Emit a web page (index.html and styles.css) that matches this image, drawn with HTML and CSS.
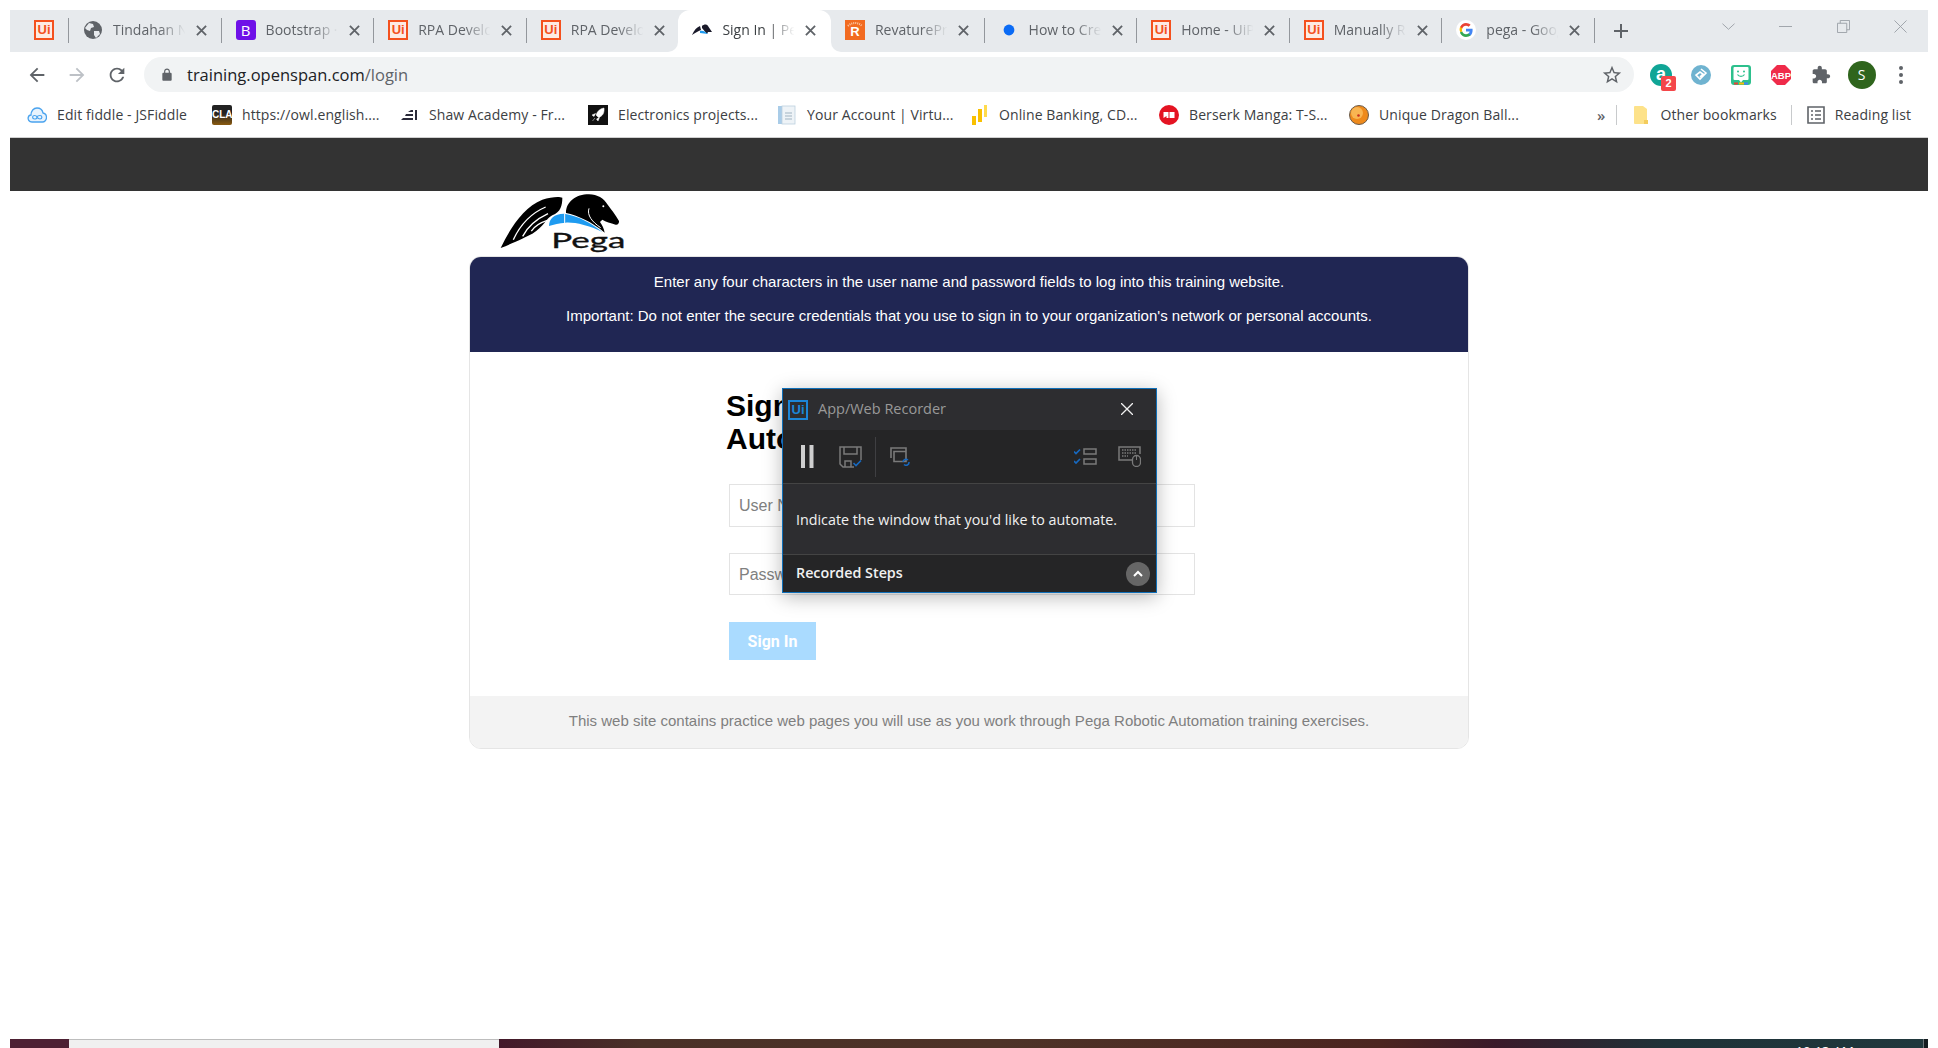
FILE: index.html
```html
<!DOCTYPE html>
<html lang="en">
<head>
<meta charset="utf-8">
<title>Sign In | Pega</title>
<link rel="stylesheet" href="styles.css">
</head>
<body>
<div class="window">
  <div class="tabstrip">
    <div class="tab pinned"><span class="ui-icon">Ui</span></div>
    <i class="sep"></i>
    <div class="tab">
      <svg class="fav" viewBox="0 0 20 20"><circle cx="10" cy="10" r="9" fill="#5f6368"/><path d="M6 3l4 1 1 3-3 1-1 3-3-1-2-2zM11 11l5 0 1 3-4 4-2-3z" fill="#e7eaed"/></svg>
      <span class="title">Tindahan Ni Juan</span><svg class="x" viewBox="0 0 12 12"><path d="M1 1l10 10M11 1L1 11"/></svg>
    </div>
    <i class="sep"></i>
    <div class="tab">
      <span class="bs-icon">B</span>
      <span class="title">Bootstrap · The</span><svg class="x" viewBox="0 0 12 12"><path d="M1 1l10 10M11 1L1 11"/></svg>
    </div>
    <i class="sep"></i>
    <div class="tab">
      <span class="ui-icon">Ui</span>
      <span class="title">RPA Developer</span><svg class="x" viewBox="0 0 12 12"><path d="M1 1l10 10M11 1L1 11"/></svg>
    </div>
    <i class="sep"></i>
    <div class="tab left-of-active">
      <span class="ui-icon">Ui</span>
      <span class="title">RPA Developer</span><svg class="x" viewBox="0 0 12 12"><path d="M1 1l10 10M11 1L1 11"/></svg>
    </div>
    <div class="tab active">
      <svg class="fav" viewBox="0 0 20 20"><path d="M0 15C2 10 5 7 8 6l1 4C6 11 3 13 0 15zM10 6c2-2 5-2 6 0l4 6-4 0-1 2-5-6z" fill="#1a1a2a"/><path d="M8 11c2-1 5 0 8 3l-8-1z" fill="#1e9bf0"/></svg>
      <span class="title">Sign In | Pega</span><svg class="x" viewBox="0 0 12 12"><path d="M1 1l10 10M11 1L1 11"/></svg>
    </div>
    <div class="tab right-of-active">
      <svg class="fav" viewBox="0 0 20 20"><rect width="20" height="20" fill="#f26b21"/><path d="M3 6C7 2 13 2 17 6" fill="none" stroke="#fbc9a6" stroke-width="2" stroke-dasharray="1 1"/><text x="10" y="16" class="fav-r">R</text></svg>
      <span class="title">RevaturePro</span><svg class="x" viewBox="0 0 12 12"><path d="M1 1l10 10M11 1L1 11"/></svg>
    </div>
    <i class="sep"></i>
    <div class="tab">
      <svg class="fav" viewBox="0 0 20 20"><circle cx="10" cy="10" r="5.4" fill="#0b6bf5"/></svg>
      <span class="title">How to Create</span><svg class="x" viewBox="0 0 12 12"><path d="M1 1l10 10M11 1L1 11"/></svg>
    </div>
    <i class="sep"></i>
    <div class="tab">
      <span class="ui-icon">Ui</span>
      <span class="title">Home - UiPath</span><svg class="x" viewBox="0 0 12 12"><path d="M1 1l10 10M11 1L1 11"/></svg>
    </div>
    <i class="sep"></i>
    <div class="tab">
      <span class="ui-icon">Ui</span>
      <span class="title">Manually Reco</span><svg class="x" viewBox="0 0 12 12"><path d="M1 1l10 10M11 1L1 11"/></svg>
    </div>
    <i class="sep"></i>
    <div class="tab">
      <svg class="fav" viewBox="0 0 20 20"><circle cx="10" cy="10" r="10" fill="#fff"/><path d="M16.6 10.2c0-.5 0-1-.1-1.400H10v2.700h3.700c-.2.9-.7 1.600-1.400 2.100v1.800h2.300c1.300-1.200 2-3 2-5.200z" fill="#4285f4"/><path d="M10 17c1.900 0 3.400-.6 4.600-1.700l-2.300-1.800c-.6.400-1.400.7-2.300.7-1.800 0-3.300-1.200-3.800-2.800H4.200v1.800C5.400 15.500 7.500 17 10 17z" fill="#34a853"/><path d="M6.200 11.400c-.3-.9-.3-1.900 0-2.800V6.800H4.200c-.8 1.600-.8 3.600 0 5.200l2-.6z" fill="#fbbc05"/><path d="M10 5.800c1 0 1.900.4 2.600 1l2-2C13.400 3.700 11.800 3 10 3 7.500 3 5.400 4.500 4.200 6.800l2 1.800C6.700 7 8.200 5.800 10 5.800z" fill="#ea4335"/></svg>
      <span class="title">pega - Google</span><svg class="x" viewBox="0 0 12 12"><path d="M1 1l10 10M11 1L1 11"/></svg>
    </div>
    <i class="sep"></i>
    <div class="strip-end">
      <svg class="plus" viewBox="0 0 14 14"><path d="M7 0v14M0 7h14"/></svg>
      <svg class="wc chev" viewBox="0 0 14 14"><path d="M.5 4L7 10l6.500-6"/></svg>
      <svg class="wc min" viewBox="0 0 14 14"><path d="M0 7h14"/></svg>
      <svg class="wc max" viewBox="0 0 14 14"><path d="M.5 3.500h10v10H.5zM3.500 3.500V.5h10v10h-3"/></svg>
      <svg class="wc cls" viewBox="0 0 14 14"><path d="M.5.5l13 13M13.500.5l-13 13"/></svg>
    </div>
  </div>

  <div class="toolbar">
    <div class="nav-btn"><svg viewBox="0 0 24 24" class="ico"><path d="M20 11H7.830l5.590-5.590L12 4l-8 8 8 8 1.410-1.410L7.830 13H20v-2z"/></svg></div>
    <div class="nav-btn"><svg viewBox="0 0 24 24" class="ico dim"><path d="M4 11h12.170l-5.590-5.590L12 4l8 8-8 8-1.410-1.410L16.170 13H4v-2z"/></svg></div>
    <div class="nav-btn"><svg viewBox="0 0 24 24" class="ico"><path d="M17.650 6.350C16.200 4.900 14.210 4 12 4c-4.420 0-7.990 3.580-7.990 8s3.570 8 7.990 8c3.730 0 6.840-2.550 7.730-6h-2.080c-.82 2.330-3.040 4-5.650 4-3.310 0-6-2.690-6-6s2.690-6 6-6c1.660 0 3.140.69 4.220 1.780L13 11h7V4l-2.350 2.350z"/></svg></div>
    <div class="omnibox">
      <svg viewBox="0 0 24 24" class="lock"><path d="M18 8h-1V6c0-2.760-2.240-5-5-5S7 3.240 7 6v2H6c-1.100 0-2 .9-2 2v10c0 1.100.9 2 2 2h12c1.100 0 2-.9 2-2V10c0-1.100-.9-2-2-2zM9 6c0-1.660 1.340-3 3-3s3 1.340 3 3v2H9V6z"/></svg>
      <span class="url">training.openspan.com<span class="url-path">/login</span></span>
      <svg viewBox="0 0 24 24" class="star"><path d="M22 9.240l-7.190-.62L12 2 9.190 8.630 2 9.240l5.460 4.730L5.820 21 12 17.270 18.180 21l-1.630-7.030L22 9.240zM12 15.400l-3.760 2.270 1-4.280-3.320-2.880 4.380-.38L12 6.100l1.710 4.040 4.380.38-3.320 2.880 1 4.280L12 15.400z"/></svg>
    </div>
    <div class="exts">
      <div class="ext">
        <span class="ext-a">a</span><span class="ext-badge">2</span>
      </div>
      <div class="ext"><svg viewBox="0 0 20 20" class="ext-svg"><circle cx="10" cy="10" r="10" fill="#6fb3d0"/><path d="M10 4l5 4-6 6-4-4 4-3 3 2-3 3" fill="none" stroke="#fff" stroke-width="1.600"/></svg></div>
      <div class="ext"><svg viewBox="0 0 20 20" class="ext-svg"><rect width="20" height="20" rx="3" fill="#2dc08d"/><rect x="2.500" y="2" width="15" height="13" rx="1" fill="#fff"/><path d="M8 15h4l-2 2.500z" fill="#fff"/><circle cx="7" cy="6.500" r="1" fill="#2dc08d"/><circle cx="13" cy="6.500" r="1" fill="#2dc08d"/><path d="M6.500 9.500c1.500 2.500 5.500 2.500 7 0" fill="none" stroke="#2dc08d" stroke-width="1.200"/><path d="M3 18.500h4" stroke="#ea4335" stroke-width="2"/><path d="M8 18.500h5" stroke="#fbbc05" stroke-width="2"/><path d="M13 18.500h4" stroke="#4285f4" stroke-width="2"/></svg></div>
      <div class="ext"><svg viewBox="0 0 20 20" class="ext-svg"><path d="M6 0h8l6 6v8l-6 6H6l-6-6V6z" fill="#ef2b4a"/><text x="10" y="13.500" class="abp">ABP</text></svg></div>
      <div class="ext"><svg viewBox="0 0 24 24" class="ext-svg"><path fill="#5f6368" d="M20.500 11H19V7c0-1.100-.9-2-2-2h-4V3.500C13 2.120 11.880 1 10.500 1S8 2.120 8 3.500V5H4c-1.100 0-1.990.9-1.990 2v3.800H3.500c1.490 0 2.700 1.210 2.700 2.700s-1.210 2.700-2.700 2.700H2V20c0 1.100.9 2 2 2h3.800v-1.500c0-1.490 1.210-2.700 2.700-2.700 1.490 0 2.700 1.210 2.700 2.700V22H17c1.100 0 2-.9 2-2v-4h1.500c1.380 0 2.500-1.120 2.500-2.500S21.880 11 20.500 11z"/></svg></div>
      <div class="ext"><span class="avatar">S</span></div>
      <div class="ext"><span class="kebab"><i></i><i></i><i></i></span></div>
    </div>
  </div>

  <div class="bookmarks">
    <div class="bm-list">
      <div class="bm"><svg class="bm-ico" viewBox="0 0 20 20"><path d="M5 17C2 17 .8 14.500 1.200 12.500 1.500 11 2.700 10 4 10 4 6 6.500 3 10 3s5.500 2.500 6 5c2 .3 3.500 2 3.500 4.500S17.500 17 15.500 17z" fill="#e8f3fd" stroke="#4aa3ee" stroke-width="1.300"/><path d="M7.500 10.500c-2.500 0-2.500 3.500 0 3.500S10 12.200 10 12.200s1.500 1.800 3 1.800c2.500 0 2.500-3.500 0-3.500S10 12.200 10 12.200 9.500 10.500 7.500 10.500z" fill="none" stroke="#4aa3ee" stroke-width="1.200"/></svg><span>Edit fiddle - JSFiddle</span></div>
      <div class="bm"><span class="cla">CLA</span><span>https://owl.english....</span></div>
      <div class="bm"><svg class="bm-ico" viewBox="0 0 20 20"><path d="M2 15h12v-2H4zM6 11h8V9H7zM16 5v10h2V5zM9 7h5V5h-2z" fill="#2b2b3a"/></svg><span>Shaw Academy - Fr...</span></div>
      <div class="bm"><svg class="bm-ico" viewBox="0 0 20 20"><rect width="20" height="20" fill="#111"/><path d="M16 3c-4 .5-6.500 3-8 7l2.500 2.500c4-1.500 6-4 5.500-9.500zM7.500 8.500L4 10l2 1.500zM11.500 12.500L10 16l-1.500-2zM7 13l-2.500 3" fill="#fff" stroke="#fff" stroke-width=".5"/></svg><span>Electronics projects...</span></div>
      <div class="bm"><svg class="bm-ico" viewBox="0 0 20 20"><rect x="1" y="1" width="5" height="18" fill="#a9cce8"/><rect x="5" y="1" width="13" height="18" fill="#eef3f7" stroke="#bcd0df" stroke-width=".8"/><path d="M8 8h7M8 11h7M8 14h7" stroke="#9fb3c2" stroke-width="1.200"/></svg><span>Your Account | Virtu...</span></div>
      <div class="bm"><svg class="bm-ico" viewBox="0 0 20 20"><path d="M3 11h4v9H3zM9 4h4v13H9z" fill="#f9c000"/><rect x="15" y="0" width="3" height="12" fill="#ffdb4d"/></svg><span>Online Banking, CD...</span></div>
      <div class="bm"><svg class="bm-ico" viewBox="0 0 20 20"><circle cx="10" cy="10" r="10" fill="#e41322"/><path d="M4.500 7h5v6h-2V11l-3 2zM10.500 7h5v6h-5z" fill="#fff"/></svg><span>Berserk Manga: T-S...</span></div>
      <div class="bm"><svg class="bm-ico" viewBox="0 0 20 20"><circle cx="10" cy="10" r="9.500" fill="#ee8a1c" stroke="#6b5b4a"/><circle cx="8" cy="8" r="6" fill="#f9b552"/><circle cx="9.500" cy="10.500" r="1.300" fill="#c8301d"/></svg><span>Unique Dragon Ball...</span></div>
    </div>
    <div class="bm-right">
      <span class="more">»</span>
      <i class="bm-sep"></i>
      <div class="bm bm-folder"><svg class="bm-ico folder" viewBox="0 0 16 20"><path d="M2 1h8l4 3v15H2a1 1 0 0 1-1-1V2a1 1 0 0 1 1-1z" fill="#fde28a"/><path d="M11 15h4v4h-4z" fill="#f3cc5d"/></svg><span class="bm-other">Other bookmarks</span></div>
      <i class="bm-sep"></i>
      <div class="bm bm-reading"><svg class="bm-ico list" viewBox="0 0 18 18"><path d="M1 1h16v16H1z" fill="none" stroke="#5f6368" stroke-width="1.600"/><path d="M4 5h2M8 5h6M4 9h2M8 9h6M4 13h2M8 13h6" stroke="#5f6368" stroke-width="1.600"/></svg><span>Reading list</span></div>
    </div>
  </div>

  <div class="sitebar"></div>

  <main class="page">
    <div class="logo-wrap">
      <svg class="logo" viewBox="115 35 390 185">
        <path d="M120 203C150 140 190 80 245 58 270 50 295 48 305 52 305 75 300 95 275 105 255 115 250 140 215 160 195 170 165 185 120 203z" fill="#000"/>
        <path d="M158 178C178 135 208 100 255 80M186 168C203 135 230 115 262 100M212 152C222 137 238 127 260 120" stroke="#fff" stroke-width="4" fill="none"/>
        <path d="M265 137C265 115 280 100 310 100 350 105 395 130 425 155 385 135 340 125 315 127 295 128 280 132 265 137z" fill="#1e9bf0"/>
        <path d="M312 100v28" stroke="#fff" stroke-width="3"/>
        <path d="M316 98C316 65 345 42 385 42 410 42 430 55 440 72 450 85 465 105 475 122 476 128 472 134 465 133 450 128 435 125 425 118L418 125C425 135 430 145 432 157 395 125 350 105 316 98z" fill="#000"/>
        <path d="M385 84C378 105 395 125 420 142" fill="none" stroke="#fff" stroke-width="3"/>
        <circle cx="428" cy="78" r="3" fill="#fff"/>
        <text x="272" y="203" class="logo-text" textLength="222" lengthAdjust="spacingAndGlyphs">Pega</text>
      </svg>
    </div>
    <section class="card">
      <header class="notice">
        <p>Enter any four characters in the user name and password fields to log into this training website.</p>
        <p>Important: Do not enter the secure credentials that you use to sign in to your organization's network or personal accounts.</p>
      </header>
      <div class="card-body">
        <h1 class="heading">Sign In to<br>Automation</h1>
        <input class="field" type="text" placeholder="User Name">
        <input class="field" type="password" placeholder="Password">
        <button class="signin" type="button">Sign In</button>
      </div>
      <footer class="card-foot">This web site contains practice web pages you will use as you work through Pega Robotic Automation training exercises.</footer>
    </section>
  </main>

  <div class="desktop">
    <div class="d-start"></div>
    <div class="d-window"></div>
    <div class="d-wall"><span class="d-clock">10:13 AM</span></div>
    <div class="d-edge"></div>
  </div>
</div>

<aside class="recorder">
  <div class="rec-title">
    <span class="rec-logo">Ui</span>
    <span class="rec-name">App/Web Recorder</span>
    <svg class="rec-x" viewBox="0 0 12 12"><path d="M0 0l12 12M12 0L0 12"/></svg>
  </div>
  <div class="rec-tools">
    <svg class="r-pause" viewBox="0 0 13 23"><rect x="0" width="4" height="23" fill="#cfcfcf"/><rect x="8.500" width="4" height="23" fill="#cfcfcf"/></svg>
    <svg class="r-save" viewBox="0 0 23 22"><path d="M15 21H4l-3-3V1h21v13" fill="none" stroke="#7a7a7a" stroke-width="1.500"/><path d="M5 1v7h13V1M6 21v-6h6v6" fill="none" stroke="#7a7a7a" stroke-width="1.500"/><path d="M14.500 17l2.500 2.500 5-5" fill="none" stroke="#1769c0" stroke-width="1.600"/></svg>
    <i class="r-div"></i>
    <svg class="r-win" viewBox="0 0 20 19"><path d="M1 11V1h15v3" fill="none" stroke="#7a7a7a" stroke-width="1.600"/><path d="M4 4.500h12v10H4z" fill="#252526" stroke="#7a7a7a" stroke-width="1.600"/><path d="M13 15a3 3 0 0 1 5-2M19 15a3 3 0 0 1-5 2.500" fill="none" stroke="#1769c0" stroke-width="1.500"/></svg>
    <svg class="r-check" viewBox="0 0 23 17"><path d="M0 3.500l2 2 4-4M0 13l2 2 4-4" fill="none" stroke="#1769c0" stroke-width="1.700"/><path d="M10 1h12v5H10zM10 11h12v5H10z" fill="none" stroke="#7a7a7a" stroke-width="1.500"/></svg>
    <svg class="r-kb" viewBox="0 0 23 21"><path d="M14 14H1V1h21v7" fill="none" stroke="#7a7a7a" stroke-width="1.500"/><path d="M4 4h15M4 7h15M4 10h6" stroke="#7a7a7a" stroke-dasharray="1.500 1" stroke-width="1.300"/><rect x="14.500" y="9.500" width="8" height="11" rx="4" fill="#252526" stroke="#7a7a7a" stroke-width="1.300"/><path d="M18.500 10v4" stroke="#7a7a7a"/></svg>
  </div>
  <div class="rec-msg">Indicate the window that you'd like to automate.</div>
  <div class="rec-foot">
    <span class="rec-steps">Recorded Steps</span>
    <span class="rec-toggle"><svg viewBox="0 0 10 7"><path d="M1 6l4-4 4 4"/></svg></span>
  </div>
</aside>
</body>
</html>
```

FILE: styles.css
```css
* { box-sizing: border-box; }
html, body { margin: 0; height: 100%; }
body {
  background: #fff;
  overflow: hidden;
  padding: 10px 10px 0;
  font-family: "Open Sans", "Noto Sans", sans-serif;
  position: relative;
}
.window { display: flex; flex-direction: column; height: 1038px; overflow: hidden; }

/* tab strip */
.tabstrip {
  display: flex;
  height: 42px;
  flex: none;
  background: linear-gradient(#e7eaed 50%, #fff 50%);
}
.tab {
  width: 151.6px;
  flex: none;
  display: flex;
  align-items: center;
  padding-left: 14px;
  padding-bottom: 2px;
  background: #e7eaed;
  color: #5f6368;
  font-size: 14px;
}
.tab.pinned { width: 58px; padding-left: 24px; }
.tab.left-of-active { border-bottom-right-radius: 10px; }
.tab.right-of-active { border-bottom-left-radius: 10px; }
.tab.active { width: 152.6px; background: #fff; border-radius: 12px 12px 0 0; color: #3c4043; }
.tab.right-of-active { width: 152.6px; }
.sep { width: 1px; flex: none; background: #e7eaed; position: relative; }
.sep::before { content: ""; display: block; margin-top: 8px; height: 25px; background: #93979c; }
.fav { width: 20px; height: 20px; flex: none; }
.fav-r { font: 700 13px "Liberation Sans", sans-serif; fill: #fff; text-anchor: middle; }
.ui-icon {
  width: 20px; height: 20px; flex: none;
  border: 2px solid #f4511e;
  background: #fdebe4;
  color: #f4511e;
  font: 700 13px/16px "Liberation Sans", sans-serif;
  text-align: center;
}
.bs-icon {
  width: 20px; height: 20px; flex: none;
  border-radius: 3px;
  background: #6f10e8;
  color: #fff;
  font: 400 15px/20px "Open Sans", sans-serif;
  text-align: center;
}
.title {
  width: 74px;
  margin-left: 10px;
  margin-right: 6px;
  margin-bottom: 1px;
  white-space: nowrap;
  overflow: hidden;
  -webkit-mask-image: linear-gradient(to right, #000 62%, transparent 98%);
  mask-image: linear-gradient(to right, #000 62%, transparent 98%);
}
.x { width: 11px; height: 11px; margin-left: 3px; flex: none; }
.x path { fill: none; stroke: #5f6368; stroke-width: 2; }
.strip-end {
  flex: 1;
  display: flex;
  align-items: center;
  background: #e7eaed;
  padding-right: 22px;
}
.plus { width: 14px; height: 14px; margin-left: 19px; flex: none; }
.plus path { fill: none; stroke: #5f6368; stroke-width: 2; }
.wc { width: 13px; height: 13px; flex: none; margin-bottom: 9px; }
.wc path { fill: none; stroke: #9aa0a6; stroke-width: 1; }
.chev { margin-left: 94px; }
.min { margin-left: 44px; }
.max { margin-left: 45px; }
.cls { margin-left: 44px; }

/* toolbar */
.toolbar { display: flex; align-items: center; height: 45px; flex: none; padding-left: 6.500px; }
.nav-btn { width: 40px; display: flex; justify-content: center; }
.ico { width: 22px; height: 22px; fill: #5f6368; }
.ico.dim { fill: #bdc1c6; }
.omnibox {
  width: 1490px;
  height: 35px;
  margin-left: 7.500px;
  background: #f1f3f4;
  border-radius: 18px;
  display: flex;
  align-items: center;
  padding: 0 11px 0 16px;
  flex: none;
}
.lock { width: 14px; height: 14px; fill: #5f6368; flex: none; }
.url { margin-left: 13px; font-size: 16.500px; color: #202124; white-space: nowrap; }
.url-path { color: #5f6368; }
.star { width: 22px; height: 22px; fill: #5f6368; margin-left: auto; }
.exts { display: flex; margin-left: 7px; }
.ext { width: 40px; height: 34px; display: flex; align-items: center; justify-content: center; position: relative; }
.ext-svg { width: 20px; height: 20px; }
.ext-a {
  width: 22px; height: 22px; border-radius: 50%;
  background: #10a596; color: #fff;
  font: 700 18px/20px "Liberation Sans", sans-serif;
  text-align: center;
}
.ext-badge {
  position: absolute; left: 20px; top: 18px;
  width: 15px; height: 15px; border-radius: 2px;
  background: #f4474a; color: #fff;
  font: 700 11px/15px "Liberation Sans", sans-serif;
  text-align: center;
}
.abp { font: 700 9.500px "Liberation Sans", sans-serif; fill: #fff; text-anchor: middle; }
.avatar {
  width: 28px; height: 28px; border-radius: 50%;
  margin-left: 1px;
  background: #2f651d; color: #fff;
  font-size: 14px; line-height: 28px; text-align: center;
}
.kebab { display: flex; flex-direction: column; gap: 3px; }
.kebab i { width: 4px; height: 4px; border-radius: 50%; background: #5f6368; }

/* bookmarks */
.bookmarks {
  display: flex;
  height: 41px;
  flex: none;
  padding: 0 17px 5px;
  align-items: center;
  border-bottom: 1px solid #d0d0d0;
  font-size: 14px;
  letter-spacing: .1px;
  color: #3c4043;
}
.bm-list {
  display: grid;
  grid-template-columns: 185px 187px 189px 189px 192px 190px 190px 1fr;
  flex: 1;
  align-items: center;
}
.bm { display: flex; align-items: center; gap: 10px; white-space: nowrap; }
.bm-ico { width: 20px; height: 20px; flex: none; }
.bm-ico.folder { width: 16px; }
.bm-ico.list { width: 18px; height: 18px; }
.cla {
  width: 20px; height: 20px; flex: none;
  background: linear-gradient(#222 40%, #8a5a10);
  border-radius: 2px;
  color: #fff;
  font: 700 10px/20px "Liberation Sans Narrow", "Liberation Sans", sans-serif;
  text-align: center;
  overflow: hidden;
  letter-spacing: 0;
}
.bm-right { display: flex; align-items: center; flex: none; }
.more { font-size: 15px; font-weight: 600; color: #5f6368; margin-right: 11px; }
.bm-sep { width: 1px; height: 20px; background: #c8cacc; }
.bm-folder { margin: 0 14px 0 16px; }
.bm-reading { margin-left: 15px; }
.bm-other { margin-left: 1px; }

/* site */
.sitebar { height: 53px; flex: none; background: #333; }
.page { flex: 1; min-height: 0; }
.logo-wrap { width: 1000px; margin: 1px auto 0; height: 64px; padding-left: 30px; }
.logo { display: block; width: 130px; height: 61.700px; }
.logo-text { font: 400 66px "Lato", "Liberation Sans", sans-serif; fill: #111; stroke: #111; stroke-width: 1px; }
.card {
  width: 1000px;
  margin: 0 auto;
  border: 1px solid #e5e5e5;
  border-radius: 12px;
  font-family: "Liberation Sans", Arial, sans-serif;
  font-size: 15px;
  overflow: hidden;
}
.notice {
  height: 96px;
  margin: -1px -1px 0;
  background: #202653;
  color: #fff;
  text-align: center;
  padding-top: 17px;
  line-height: 18px;
}
.notice p { margin: 0 0 16px; }
.card-body { height: 344px; padding: 37px 0 0 256px; }
.heading { margin: 0 0 29px; font: 700 30px/33px "Liberation Sans", Arial, sans-serif; color: #000; }
.field {
  display: block;
  width: 466px;
  height: 43px;
  margin: 0 0 26px 3px;
  border: 1px solid #e3e3e3;
  padding: 0 9px;
  font: 16px "Liberation Sans", Arial, sans-serif;
  outline: none;
}
.field + .field { height: 42px; padding-top: 2px; margin-bottom: 27px; }
.field::placeholder { color: #808080; opacity: 1; }
.signin {
  display: block;
  width: 87px;
  height: 38px;
  margin: 0 0 0 3px;
  border: 0;
  background: #aadbff;
  color: #fff;
  font: 700 16px Roboto, "Liberation Sans", sans-serif;
}
.card-foot {
  height: 52px;
  background: #f3f3f3;
  color: #7f7f7f;
  text-align: center;
  line-height: 50px;
}

/* desktop strip */
.desktop { display: flex; height: 9px; flex: none; overflow: hidden; }
.d-start { width: 59px; background: #4d2033; }
.d-window { width: 430px; background: #f0f0f0; border-top: 1px solid #bdbdbd; }
.d-wall {
  flex: 1;
  background: linear-gradient(to right, #43182a 0, #4a3128 10%, #4e3328 35%, #4c2520 62%, #3a1a2a 70%, #1f3238 82%, #20383d 100%);
  color: #fff;
  font-size: 13.500px;
  line-height: 16px;
  padding: 4px 69px 0 0;
  text-align: right;
  overflow: hidden;
}
.d-clock { display: inline-block; }
.d-edge { width: 5px; background: #141c20; border-left: 1px solid #6a7478; }

/* floating recorder */
.recorder {
  position: absolute;
  left: 782px;
  top: 388px;
  width: 375px;
  height: 205px;
  display: flex;
  flex-direction: column;
  background: #2d2d30;
  border: 1px solid #0f6fb8;
  box-shadow: 0 4px 18px rgba(0, 0, 0, .28);
  color: #f1f1f1;
  font-family: "Open Sans", "Noto Sans", sans-serif;
  font-size: 14.300px;
}
.rec-title { display: flex; align-items: center; height: 41px; flex: none; padding: 0 23px 0 5px; }
.rec-logo {
  width: 20px; height: 20px; flex: none;
  border: 2px solid #1c86d8;
  color: #1c86d8;
  font: 700 13px/16px "Liberation Sans", sans-serif;
  text-align: center;
}
.rec-name { margin: 0 0 2px 10px; color: #999; font-size: 14.500px; }
.rec-x { width: 12px; height: 12px; margin-left: auto; margin-bottom: 2px; }
.rec-x path { fill: none; stroke: #f1f1f1; stroke-width: 1.300; }
.rec-tools {
  display: flex;
  align-items: center;
  height: 54px;
  flex: none;
  background: #252526;
  border-bottom: 1px solid #444;
  padding: 0 15px 0 18px;
}
.r-pause { width: 13px; height: 23px; }
.r-save { width: 23px; height: 22px; margin-left: 25px; }
.r-div { width: 1px; height: 40px; background: #3f3f42; margin-left: 13px; }
.r-win { width: 20px; height: 19px; margin-left: 14px; }
.r-check { width: 23px; height: 17px; margin-left: auto; }
.r-kb { width: 23px; height: 21px; margin-left: 21px; }
.rec-msg {
  height: 71px;
  flex: none;
  padding-left: 13px;
  line-height: 71px;
  border-bottom: 1px solid #444;
}
.rec-foot {
  flex: 1;
  display: flex;
  align-items: center;
  justify-content: space-between;
  background: #252526;
  padding: 0 6px 0 13px;
}
.rec-steps { font-weight: 600; margin-bottom: 2px; }
.rec-toggle {
  width: 24px; height: 24px; border-radius: 50%;
  background: #666;
  display: flex; align-items: center; justify-content: center;
}
.rec-toggle svg { width: 10px; height: 7px; }
.rec-toggle path { fill: none; stroke: #fff; stroke-width: 2; }
```
